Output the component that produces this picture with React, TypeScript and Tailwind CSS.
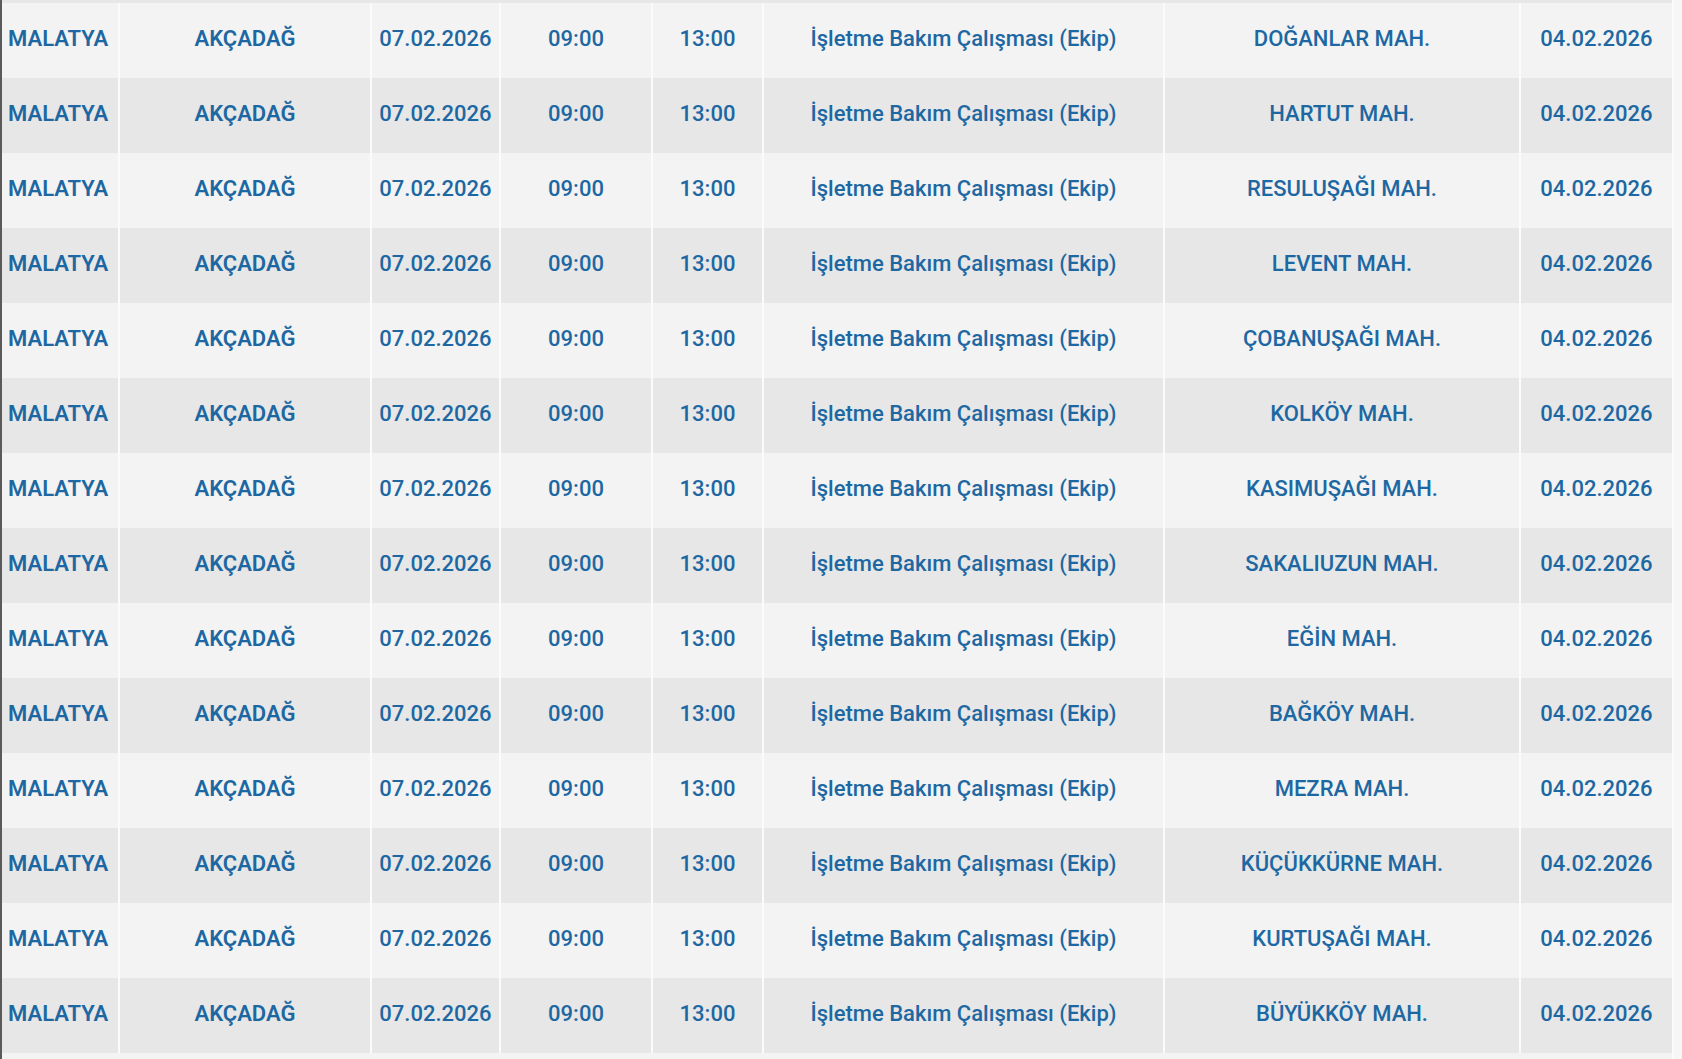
import React from "react";

const places = [
  "DOĞANLAR MAH.",
  "HARTUT MAH.",
  "RESULUŞAĞI MAH.",
  "LEVENT MAH.",
  "ÇOBANUŞAĞI MAH.",
  "KOLKÖY MAH.",
  "KASIMUŞAĞI MAH.",
  "SAKALIUZUN MAH.",
  "EĞİN MAH.",
  "BAĞKÖY MAH.",
  "MEZRA MAH.",
  "KÜÇÜKKÜRNE MAH.",
  "KURTUŞAĞI MAH.",
  "BÜYÜKKÖY MAH.",
];

const cell = "flex items-center justify-center border-l-2 border-[#fbfbfb] pb-[4px]";

function Row({ place, i }: { place: string; i: number }) {
  const bg = i % 2 === 0 ? "bg-[#f3f3f3]" : "bg-[#e7e7e7]";
  return (
    <div className={`flex h-[75px] ${bg}`}>
      <div className="flex w-[116px] items-center pb-[4px] pl-[6px] font-semibold">MALATYA</div>
      <div className={`${cell} w-[252px] font-semibold`}>AKÇADAĞ</div>
      <div className={`${cell} w-[129px]`}>07.02.2026</div>
      <div className={`${cell} w-[152px]`}>09:00</div>
      <div className={`${cell} w-[111px]`}>13:00</div>
      <div className={`${cell} w-[401px]`}>İşletme Bakım Çalışması (Ekip)</div>
      <div className={`${cell} w-[356px]`}>{place}</div>
      <div className={`${cell} w-[153px]`}>04.02.2026</div>
    </div>
  );
}

export default function App() {
  return (
    <div
      className="flex h-[1059px] w-[1682px] overflow-hidden bg-[#f7f7f7] text-[22px] font-medium text-[#1d68a2]"
      style={{ fontFamily: "Roboto, 'Noto Sans', sans-serif" }}
    >
      <div className="flex w-[1672px] flex-col border-l-2 border-[#5a5a5a]">
        <div className="h-[3px] bg-[#e7e7e7]" />
        {places.map((p, i) => (
          <Row key={i} place={p} i={i} />
        ))}
        <div className="flex-1 bg-[#f3f3f3]" />
      </div>
      <div className="w-[10px] border-l-2 border-[#fbfbfb] bg-[#f6f6f6]" />
    </div>
  );
}
